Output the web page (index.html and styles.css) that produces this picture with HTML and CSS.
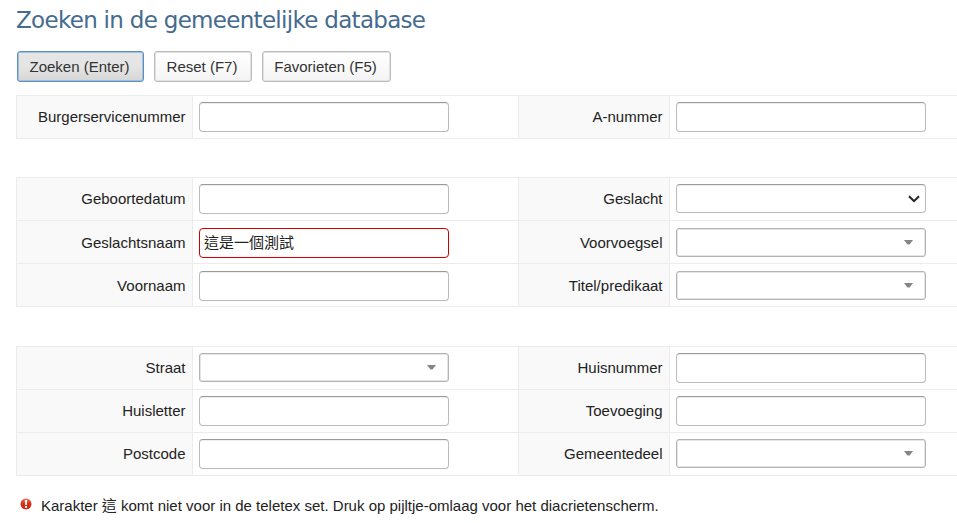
FILE: index.html
```html
<!DOCTYPE html>
<html lang="nl">
<head>
<meta charset="utf-8">
<title>Zoeken in de gemeentelijke database</title>
<link rel="stylesheet" href="styles.css">
</head>
<body>
<h1>Zoeken in de gemeentelijke database</h1>
<div class="buttons">
  <button class="button primary">Zoeken (Enter)</button>
  <button class="button reset">Reset (F7)</button>
  <button class="button favorites">Favorieten (F5)</button>
</div>
<div class="group">
  <div class="row"><label>Burgerservicenummer</label><div class="cell"><div class="input"></div></div><label>A-nummer</label><div class="cell"><div class="input"></div></div></div>
</div>
<div class="group">
  <div class="row"><label>Geboortedatum</label><div class="cell"><div class="input"></div></div><label>Geslacht</label><div class="cell"><div class="input select"><svg width="12" height="8" viewBox="0 0 12 8"><path d="M1 1.2 6 6.2 11 1.2" fill="none" stroke="#222" stroke-width="2"/></svg></div></div></div>
  <div class="row low"><label>Geslachtsnaam</label><div class="cell"><div class="input error">這是一個測試</div></div><label>Voorvoegsel</label><div class="cell"><div class="input combo"><svg width="9" height="5" viewBox="0 0 9 5"><path d="M0 0H9L5.5 4.5H3.5Z" fill="#858585"/></svg></div></div></div>
  <div class="row low"><label>Voornaam</label><div class="cell"><div class="input"></div></div><label>Titel/predikaat</label><div class="cell"><div class="input combo"><svg width="9" height="5" viewBox="0 0 9 5"><path d="M0 0H9L5.5 4.5H3.5Z" fill="#858585"/></svg></div></div></div>
</div>
<div class="group">
  <div class="row"><label>Straat</label><div class="cell"><div class="input combo"><svg width="9" height="5" viewBox="0 0 9 5"><path d="M0 0H9L5.5 4.5H3.5Z" fill="#858585"/></svg></div></div><label>Huisnummer</label><div class="cell"><div class="input"></div></div></div>
  <div class="row"><label>Huisletter</label><div class="cell"><div class="input"></div></div><label>Toevoeging</label><div class="cell"><div class="input"></div></div></div>
  <div class="row"><label>Postcode</label><div class="cell"><div class="input"></div></div><label>Gemeentedeel</label><div class="cell"><div class="input combo"><svg width="9" height="5" viewBox="0 0 9 5"><path d="M0 0H9L5.5 4.5H3.5Z" fill="#858585"/></svg></div></div></div>
</div>
<div class="message">
  <svg width="12" height="12" viewBox="0 0 12 12"><defs><linearGradient id="red" x1="0" y1="0" x2="0" y2="1"><stop offset="0" stop-color="#e8705a"/><stop offset=".5" stop-color="#d62e14"/><stop offset="1" stop-color="#cf2a12"/></linearGradient></defs><circle cx="6" cy="6" r="5.5" fill="url(#red)"/><path d="M4.8 2H7.2L6.8 7H5.2Z" fill="#fff"/><circle cx="6" cy="8.9" r="1.1" fill="#fff"/></svg>
  <span>Karakter 這 komt niet voor in de teletex set. Druk op pijltje-omlaag voor het diacrietenscherm.</span>
</div>
</body>
</html>
```
FILE: styles.css
```css
* { box-sizing: border-box; }
body {
  margin: 0;
  padding: 5px 0 0 16px;
  height: 523px;
  overflow: hidden;
  background: #fff;
  color: #222;
  font: 15px/20px "Liberation Sans", "Noto Sans CJK TC", sans-serif;
}
h1 {
  margin: 0;
  height: 46px;
  color: #456b8e;
  font: 23px/30px "DejaVu Sans", sans-serif;
  letter-spacing: -0.7px;
  white-space: nowrap;
}
.buttons { display: flex; gap: 10px; padding-left: 1px; height: 44px; }
.button {
  width: 127px;
  height: 31px;
  padding: 0 2px 0 0;
  border: 1px solid #bbb;
  border-radius: 3px;
  background: linear-gradient(#fff, #f4f4f4);
  box-shadow: inset 0 0 0 1px #e2e2e2;
  color: #333;
  font: inherit;
  white-space: nowrap;
}
.primary {
  border-color: #5b91c1;
  background: linear-gradient(#e5e5e5 50%, #d6d6d6);
  box-shadow: inset 0 0 0 1px #a5bfd6;
}
.reset { width: 98px; }
.favorites { width: 129px; }
.group {
  margin-bottom: 38px;
  border-left: 1px solid #ececec;
  border-bottom: 1px solid #ececec;
}
.group:nth-of-type(3) { margin-bottom: 39px; }
.group:nth-of-type(4) { margin-bottom: 20px; }
.row {
  display: grid;
  grid-template-columns: 175px 326px 151px 1fr;
  height: 43px;
  border-top: 1px solid #ececec;
}
label { padding: 11px 6.5px 0 0; background: #f9f9f9; text-align: right; }
.cell { padding: 6px 0 0 6px; border-left: 1px solid #ececec; }
.cell + label { border-left: 1px solid #ececec; }
.low label { padding-top: 12px; }
.low .cell { padding-top: 7px; }
.input {
  display: flex;
  align-items: center;
  width: 250px;
  height: 30px;
  padding: 0 4px;
  border: 1px solid #bbb;
  border-top-color: #999;
  border-radius: 4px;
  background: #fff;
  box-shadow: inset 0 1px 1px #eee;
}
.error { border-color: #d00000; box-shadow: none; }
.combo, .select { height: 29px; justify-content: flex-end; }
.combo {
  padding-right: 12px;
  border-color: #b3b3b3;
  border-radius: 3px;
  box-shadow: inset 0 0 0 1px #e5e5e5;
}
.select { padding-right: 5px; }
.message { display: flex; gap: 9px; padding-left: 4px; white-space: nowrap; }
.message svg { margin-top: 2px; }
```
